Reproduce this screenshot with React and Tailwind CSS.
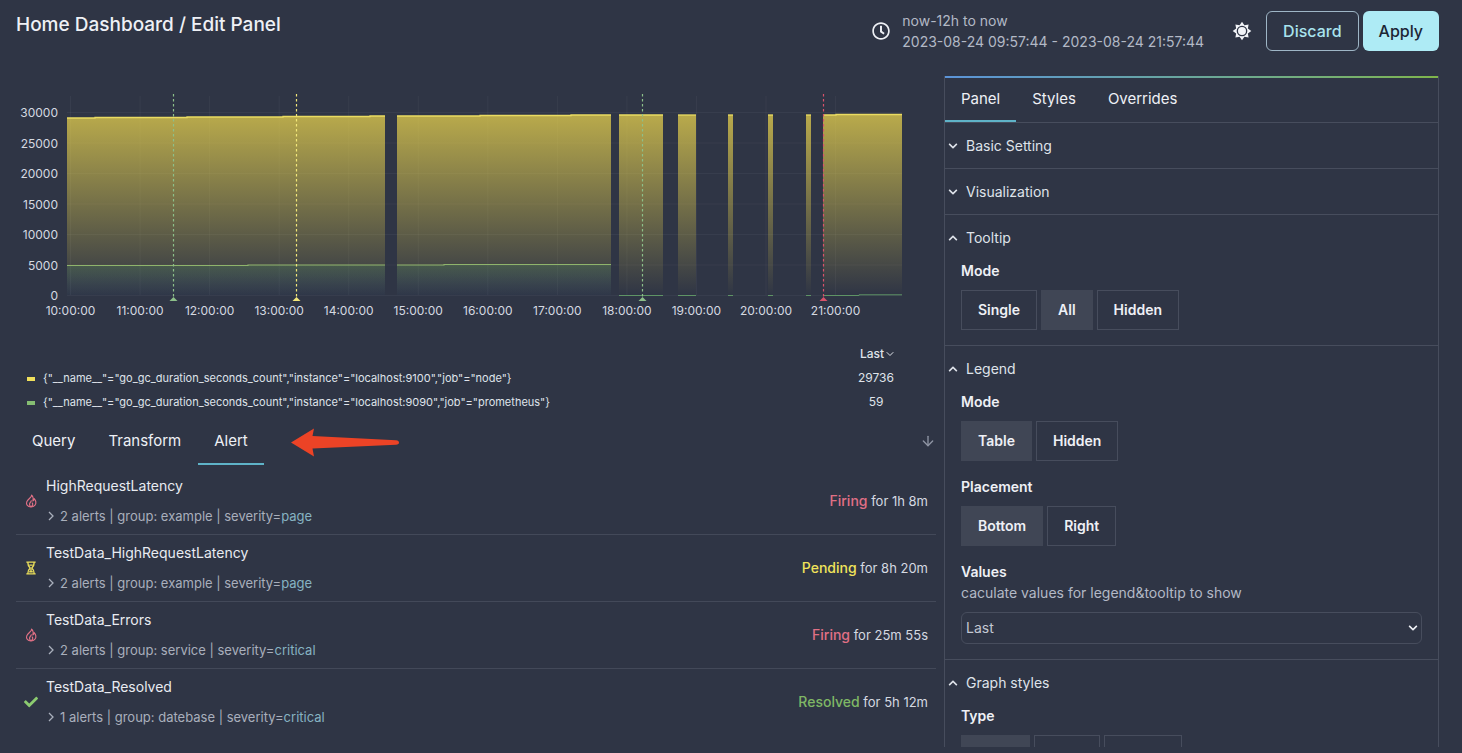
import { useState } from "react";
import { FaRegClock, FaChevronDown, FaChevronUp, FaCheck } from "react-icons/fa";
import { FiArrowDown, FiChevronDown } from "react-icons/fi";

const BASE = 295;

const spans = [
  { steps: [[67, 118], [95, 117.5], [187, 117], [283, 116.5], [370, 116]], end: 385 },
  { steps: [[397, 116], [480, 115.5], [571, 115]], end: 611 },
  { steps: [[619, 115]], end: 663 },
  { steps: [[678, 115]], end: 696 },
  { steps: [[728, 115]], end: 733 },
  { steps: [[768, 115]], end: 773 },
  { steps: [[806, 115]], end: 811 },
  { steps: [[823, 115], [836, 114.5]], end: 902 },
];

const greenLines = [
  "67,265.5 248,265.5 248,265 385,265",
  "397,265 444,265 444,264.5 611,264.5",
];

const lowLines = [
  "619,295.5 663,295.5",
  "678,295.5 696,295.5",
  "728,295.5 733,295.5",
  "768,295.5 773,295.5",
  "806,295.5 811,295.5",
  "823,295.5 859,295.5 859,294.8 902,294.8",
];

const yTicks = [30000, 25000, 20000, 15000, 10000, 5000, 0];
const xTicks = [10, 11, 12, 13, 14, 15, 16, 17, 18, 19, 20, 21];

const marks = [
  { x: 173, c: "#8dc08a" },
  { x: 296, c: "#f3e77a" },
  { x: 642, c: "#8dc08a" },
  { x: 823, c: "#d9536b" },
];

function stepLine({ steps, end }) {
  return steps
    .map(([x, y], i) => `${x},${y} ${i + 1 < steps.length ? steps[i + 1][0] : end},${y}`)
    .join(" ");
}

function Chart() {
  return (
    <svg viewBox="0 76 936 249" className="block w-full" role="img" aria-label="go_gc_duration_seconds_count">
      <defs>
        <linearGradient id="yellowFill" gradientUnits="userSpaceOnUse" x1="0" y1="115" x2="0" y2={BASE}>
          <stop offset="0" stopColor="#f4dc4e" stopOpacity="0.7" />
          <stop offset="1" stopColor="#f4dc4e" stopOpacity="0" />
        </linearGradient>
        <linearGradient id="greenFill" gradientUnits="userSpaceOnUse" x1="0" y1="265" x2="0" y2={BASE}>
          <stop offset="0" stopColor="#4f9460" stopOpacity="0.24" />
          <stop offset="1" stopColor="#3a6ea0" stopOpacity="0.04" />
        </linearGradient>
      </defs>
      <g stroke="#ffffff" strokeOpacity="0.045">
        {yTicks.map((v, i) => (
          <line key={v} x1="67" x2="902" y1={112.5 + i * 30.5} y2={112.5 + i * 30.5} />
        ))}
        {xTicks.map((h, i) => (
          <line key={h} x1={70.5 + i * 69.55} x2={70.5 + i * 69.55} y1="96" y2={BASE} />
        ))}
      </g>
      {spans.map((s) => (
        <g key={s.end}>
          <polygon points={`${s.steps[0][0]},${BASE} ${stepLine(s)} ${s.end},${BASE}`} fill="url(#yellowFill)" />
          <polyline points={stepLine(s)} fill="none" stroke="#eadc62" strokeWidth="1.3" />
        </g>
      ))}
      <rect x="67" y="265" width="318" height="30" fill="url(#greenFill)" />
      <rect x="397" y="265" width="214" height="30" fill="url(#greenFill)" />
      {greenLines.map((p) => (
        <polyline key={p} points={p} fill="none" stroke="#8fb46c" strokeWidth="1.2" />
      ))}
      {lowLines.map((p) => (
        <polyline key={p} points={p} fill="none" stroke="#5f9465" />
      ))}
      {marks.map((m) => (
        <g key={m.x}>
          <line x1={m.x + 0.5} x2={m.x + 0.5} y1="94" y2="298" stroke={m.c} strokeWidth="1.2" strokeDasharray="2.5 2.5" />
          <polygon points={`${m.x + 0.5},297 ${m.x + 4.5},301 ${m.x - 3.5},301`} fill={m.c} />
        </g>
      ))}
      <g fill="#d5d9e1" className="font-[Inter] text-[12px]">
        {yTicks.map((v, i) => (
          <text key={v} x="58" y={117 + i * 30.5} textAnchor="end">{v}</text>
        ))}
        {xTicks.map((h, i) => (
          <text key={h} x={70.5 + i * 69.55} y="315" textAnchor="middle">{`${h}:00:00`}</text>
        ))}
      </g>
    </svg>
  );
}

const sunRays = Array.from({ length: 16 }, (_, i) => {
  const r = i % 2 ? 7.6 : 11.2;
  const t = (i * Math.PI) / 8;
  return `${(12 + r * Math.sin(t)).toFixed(2)},${(12 - r * Math.cos(t)).toFixed(2)}`;
}).join(" ");

function Sun() {
  return (
    <svg viewBox="0 0 24 24" className="size-5" aria-hidden="true">
      <polygon points={sunRays} fill="#f2f4f8" />
      <circle cx="12" cy="12" r="5.6" fill="#f2f4f8" stroke="#2f3545" strokeWidth="1.6" />
    </svg>
  );
}

function Flame() {
  return (
    <svg viewBox="0 0 24 24" className="size-3.5" fill="none" stroke="#e07085" strokeWidth="2" strokeLinejoin="round" aria-hidden="true">
      <path d="M13 2c.5 4-6.5 6.5-8.3 11.500C3 18.500 6.500 22 12 22s9-3.500 8.300-8.500C20 11 18.500 9 17.500 8c0 2-1 3.500-2.300 4C16 8 15.500 4 13 2z" />
      <path d="M12.500 11c.5 2.500-3 3.500-3 6.500 0 2 1.200 3.500 2.500 4.300 2-.8 3.300-2.300 3-4.300-.2-1.500-1-2-1-3" />
    </svg>
  );
}

function Hourglass() {
  return (
    <svg viewBox="0 0 24 24" className="size-3.5" fill="none" stroke="#e8dc5a" strokeWidth="2.4" aria-hidden="true">
      <path d="M4 2h16M4 22h16M6.500 2c0 5.500 1.500 7.500 4 10-2.500 2.500-4 4.500-4 10M17.500 2c0 5.500-1.500 7.500-4 10 2.500 2.500 4 4.500 4 10" />
      <path d="M9 7h6M9 18.500h6M12 13v5" />
    </svg>
  );
}

function ChevronRight() {
  return (
    <svg viewBox="0 0 10 10" className="mr-1 size-2.5" fill="none" stroke="currentColor" strokeWidth="1.3" aria-hidden="true">
      <path d="M3 1l4 4-4 4" />
    </svg>
  );
}

function RedArrow() {
  return (
    <svg viewBox="0 0 110 30" className="mt-[5px] ml-[25px] h-[30px] w-[110px]" aria-hidden="true">
      <path
        d="M1 15.500L24 1.500L22.500 9L106 13.200Q109 13.500 109 15.500Q109 17.500 106 17.700L22.500 21.500L24 29.500Z"
        fill="#ec4326"
      />
    </svg>
  );
}

const alerts = [
  { name: "HighRequestLatency", n: 2, group: "example", severity: "page", state: "Firing", time: "1h 8m" },
  { name: "TestData_HighRequestLatency", n: 2, group: "example", severity: "page", state: "Pending", time: "8h 20m" },
  { name: "TestData_Errors", n: 2, group: "service", severity: "critical", state: "Firing", time: "25m 55s" },
  { name: "TestData_Resolved", n: 1, group: "datebase", severity: "critical", state: "Resolved", time: "5h 12m" },
];

const stateColor = { Firing: "text-[#e07085]", Pending: "text-[#f0e35a]", Resolved: "text-[#7fb765]" };

function AlertRow({ a }) {
  return (
    <li className="flex h-[67px] items-center justify-between border-b border-[#434959] px-2 last:border-transparent">
      <div className="flex items-center gap-2">
        {a.state === "Firing" && <Flame />}
        {a.state === "Pending" && <Hourglass />}
        {a.state === "Resolved" && <FaCheck className="size-3.5 text-[#8ccb70]" />}
        <div>
          <div className="text-sm leading-5 text-[#e8ebf1]">{a.name}</div>
          <button className="mt-2.5 flex items-center text-[13px] leading-5 text-[#a9afbc]">
            <ChevronRight />
            {a.n} alerts | group: {a.group} | severity=<span className="text-[#86b3c2]">{a.severity}</span>
          </button>
        </div>
      </div>
      <div className="text-[13px] text-[#d5d9e1]">
        <span className={`text-sm font-medium ${stateColor[a.state]}`}>{a.state}</span> for {a.time}
      </div>
    </li>
  );
}

function Tabs({ items, value, className }) {
  const [current, setCurrent] = useState(value);
  return items.map((t) => (
    <button
      key={t}
      onClick={() => setCurrent(t)}
      className={`border-b-2 px-4 text-[15px] ${className} ${t === current ? "border-[#5fb3c8]" : "border-transparent"}`}
    >
      {t}
    </button>
  ));
}

function Field({ label, children }) {
  return (
    <div role="group" aria-label={label}>
      <div className="text-sm leading-5 font-semibold">{label}</div>
      <div className="mt-[9px] flex gap-1">{children}</div>
    </div>
  );
}

function Choice({ label, options, value }) {
  const [picked, setPicked] = useState(value);
  return (
    <Field label={label}>
      {options.map((o) => (
        <button
          key={o}
          onClick={() => setPicked(o)}
          className={`h-10 border px-4 text-sm font-semibold ${o === picked ? "border-[#404655] bg-[#404655]" : "border-[#474d5d]"}`}
        >
          {o}
        </button>
      ))}
    </Field>
  );
}

function Section({ title, open, children }) {
  return (
    <section className="border-b border-[#474d5d] last:border-b-0">
      <button className="flex h-[45px] w-full items-center gap-2 pl-[3px] text-sm text-[#dfe3ea]">
        {open ? <FaChevronUp className="size-2.5" /> : <FaChevronDown className="size-2.5" />}
        {title}
      </button>
      {open && <div className="flex flex-col gap-4 px-4 pt-px pb-[15px]">{children}</div>}
    </section>
  );
}

const series = [
  { name: '{"__name__"="go_gc_duration_seconds_count","instance"="localhost:9100","job"="node"}', last: 29736, swatch: "bg-[#f0e05c]" },
  { name: '{"__name__"="go_gc_duration_seconds_count","instance"="localhost:9090","job"="prometheus"}', last: 59, swatch: "bg-[#85bd72]" },
];

export default function App() {
  return (
    <div className="flex h-screen flex-col overflow-hidden bg-[#2f3545] font-[Inter,sans-serif] text-[#eef0f5]">
      <header className="flex h-[76px] shrink-0 items-start justify-between pt-2.5 pr-[23px] pl-4">
        <h1 className="text-[19px] leading-[30px] font-medium">Home Dashboard / Edit Panel</h1>
        <div className="flex items-center">
          <FaRegClock className="mr-3 size-[18px]" />
          <div className="mr-7 text-sm leading-[21px] text-[#b3b9c6]">
            <div>now-12h to now</div>
            <div>2023-08-24 09:57:44 - 2023-08-24 21:57:44</div>
          </div>
          <button aria-label="Theme" className="mr-3.5">
            <Sun />
          </button>
          <button className="mr-1 h-10 rounded-md border border-[#9fb6c6] px-4 font-medium text-[#a9e3ee]">Discard</button>
          <button className="h-10 rounded-md bg-[#aeebf5] px-4 font-medium text-[#1c2534]">Apply</button>
        </div>
      </header>

      <div className="flex min-h-0 grow gap-2 pr-[23px] pb-1.5">
        <main className="flex min-w-0 grow flex-col">
          <Chart />
          <table className="mt-[17px] ml-[27px] text-xs text-[#dfe3ea]">
            <thead>
              <tr className="h-6">
                <th aria-label="Series" />
                <th className="w-[120px] pl-1 font-medium">
                  <button className="inline-flex items-center">
                    Last
                    <FiChevronDown className="size-3" />
                  </button>
                </th>
              </tr>
            </thead>
            <tbody>
              {series.map((s) => (
                <tr key={s.name} className="h-6">
                  <td className="text-[11px]">
                    <span className={`mr-2 inline-block h-1 w-2 align-middle ${s.swatch}`} />
                    {s.name}
                  </td>
                  <td className="text-center">{s.last}</td>
                </tr>
              ))}
            </tbody>
          </table>

          <nav className="mt-2 mb-[3px] flex items-start gap-px pl-4">
            <Tabs items={["Query", "Transform", "Alert"]} value="Alert" className="h-[43px] pb-0.5" />
            <RedArrow />
            <button aria-label="Collapse" className="mt-[11px] ml-auto text-[#8f95a4]">
              <FiArrowDown className="size-4" />
            </button>
          </nav>
          <ul className="pl-4">
            {alerts.map((a) => <AlertRow key={a.name} a={a} />)}
          </ul>
        </main>

        <aside className="w-[495px] shrink-0 overflow-hidden border-x border-[#474d5d]">
          <div className="h-0.5 bg-linear-to-r from-[#5b93d8] to-[#7fb54a]" />
          <nav className="flex h-[45px] border-b border-[#474d5d]">
            <Tabs items={["Panel", "Styles", "Overrides"]} value="Panel" className="" />
          </nav>
          <Section title="Basic Setting" />
          <Section title="Visualization" />
          <Section title="Tooltip" open>
            <Choice label="Mode" options={["Single", "All", "Hidden"]} value="All" />
          </Section>
          <Section title="Legend" open>
            <Choice label="Mode" options={["Table", "Hidden"]} value="Table" />
            <Choice label="Placement" options={["Bottom", "Right"]} value="Bottom" />
            <div>
              <label htmlFor="legend-values" className="block text-sm">
                <span className="block leading-5 font-semibold">Values</span>
                <span className="block leading-[22px] text-[#b3b9c6]">caculate values for legend&amp;tooltip to show</span>
              </label>
              <div className="mt-2 grid items-center">
                <select
                  id="legend-values"
                  className="col-start-1 row-start-1 h-8 w-full appearance-none rounded-md border border-[#474d5d] bg-transparent px-1 text-sm text-[#c3c8d2]"
                >
                  <option>Last</option>
                </select>
                <FaChevronDown className="pointer-events-none col-start-1 row-start-1 mr-1 size-2.5 justify-self-end" />
              </div>
            </div>
          </Section>
          <Section title="Graph styles" open>
            <Field label="Type">
              <button aria-label="Lines" className="h-10 w-[69px] bg-[#404655]" />
              <button aria-label="Bars" className="h-10 w-[66px] border border-[#474d5d]" />
              <button aria-label="Points" className="h-10 w-[78px] border border-[#474d5d]" />
            </Field>
          </Section>
        </aside>
      </div>
    </div>
  );
}
